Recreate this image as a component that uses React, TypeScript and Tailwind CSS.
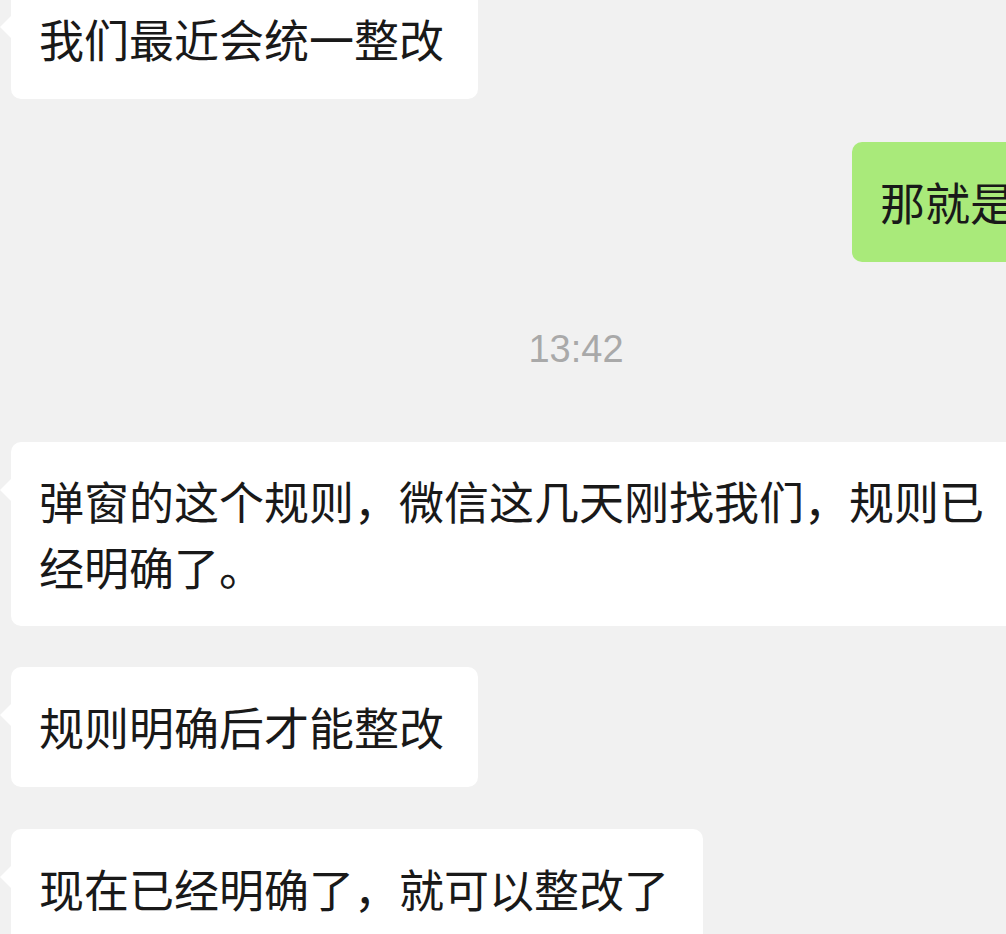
/**
 * Chat transcript - cropped WeChat-style conversation
 */

type Msg = { text: string; wide?: boolean }

function LeftBubble({ text, wide }: Msg) {
  return (
    <div className="relative ml-[11px] self-start">
      {/* tail */}
      <span className="absolute left-[-11px] top-[37px] h-0 w-0 border-y-[11px] border-r-[11px] border-y-transparent border-r-white" />
      <div
        className={`rounded-[10px] bg-white pl-[28px] pr-[34px] text-[45px] text-[#191919] ${
          wide ? 'w-[1030px] py-[26px] leading-[66px]' : 'whitespace-nowrap py-[27px] leading-[66px]'
        }`}
      >
        {text}
      </div>
    </div>
  )
}

export default function App() {
  return (
    <main
      className="h-[934px] w-[1006px] overflow-hidden bg-[#f1f1f1]"
      style={{ fontFamily: '"Noto Sans CJK SC", "Noto Sans", sans-serif' }}
    >
      <div className="mt-[-21px] flex w-[1200px] flex-col">
        <LeftBubble text="我们最近会统一整改" />

        {/* outgoing, cut off by the right edge */}
        <div className="mt-[43px] pl-[852px]">
          <div className="inline-block whitespace-nowrap rounded-[10px] bg-[#a9ea7a] py-[27px] pl-[28px] pr-[32px] text-[45px] leading-[66px] text-[#191919]">
            那就是
          </div>
        </div>

        {/* timestamp */}
        <div
          className="mt-[68px] mb-[74px] w-[1152px] text-center text-[38px] leading-[38px] text-[#a9a9a9]"
          style={{ fontFamily: '"Liberation Sans", Arial, sans-serif' }}
        >
          13:42
        </div>

        <LeftBubble
          wide
          text="弹窗的这个规则，微信这几天刚找我们，规则已经明确了。"
        />
        <div className="h-[41px]" />
        <LeftBubble text="规则明确后才能整改" />
        <div className="h-[42px]" />
        <LeftBubble text="现在已经明确了，就可以整改了" />
      </div>
    </main>
  )
}
